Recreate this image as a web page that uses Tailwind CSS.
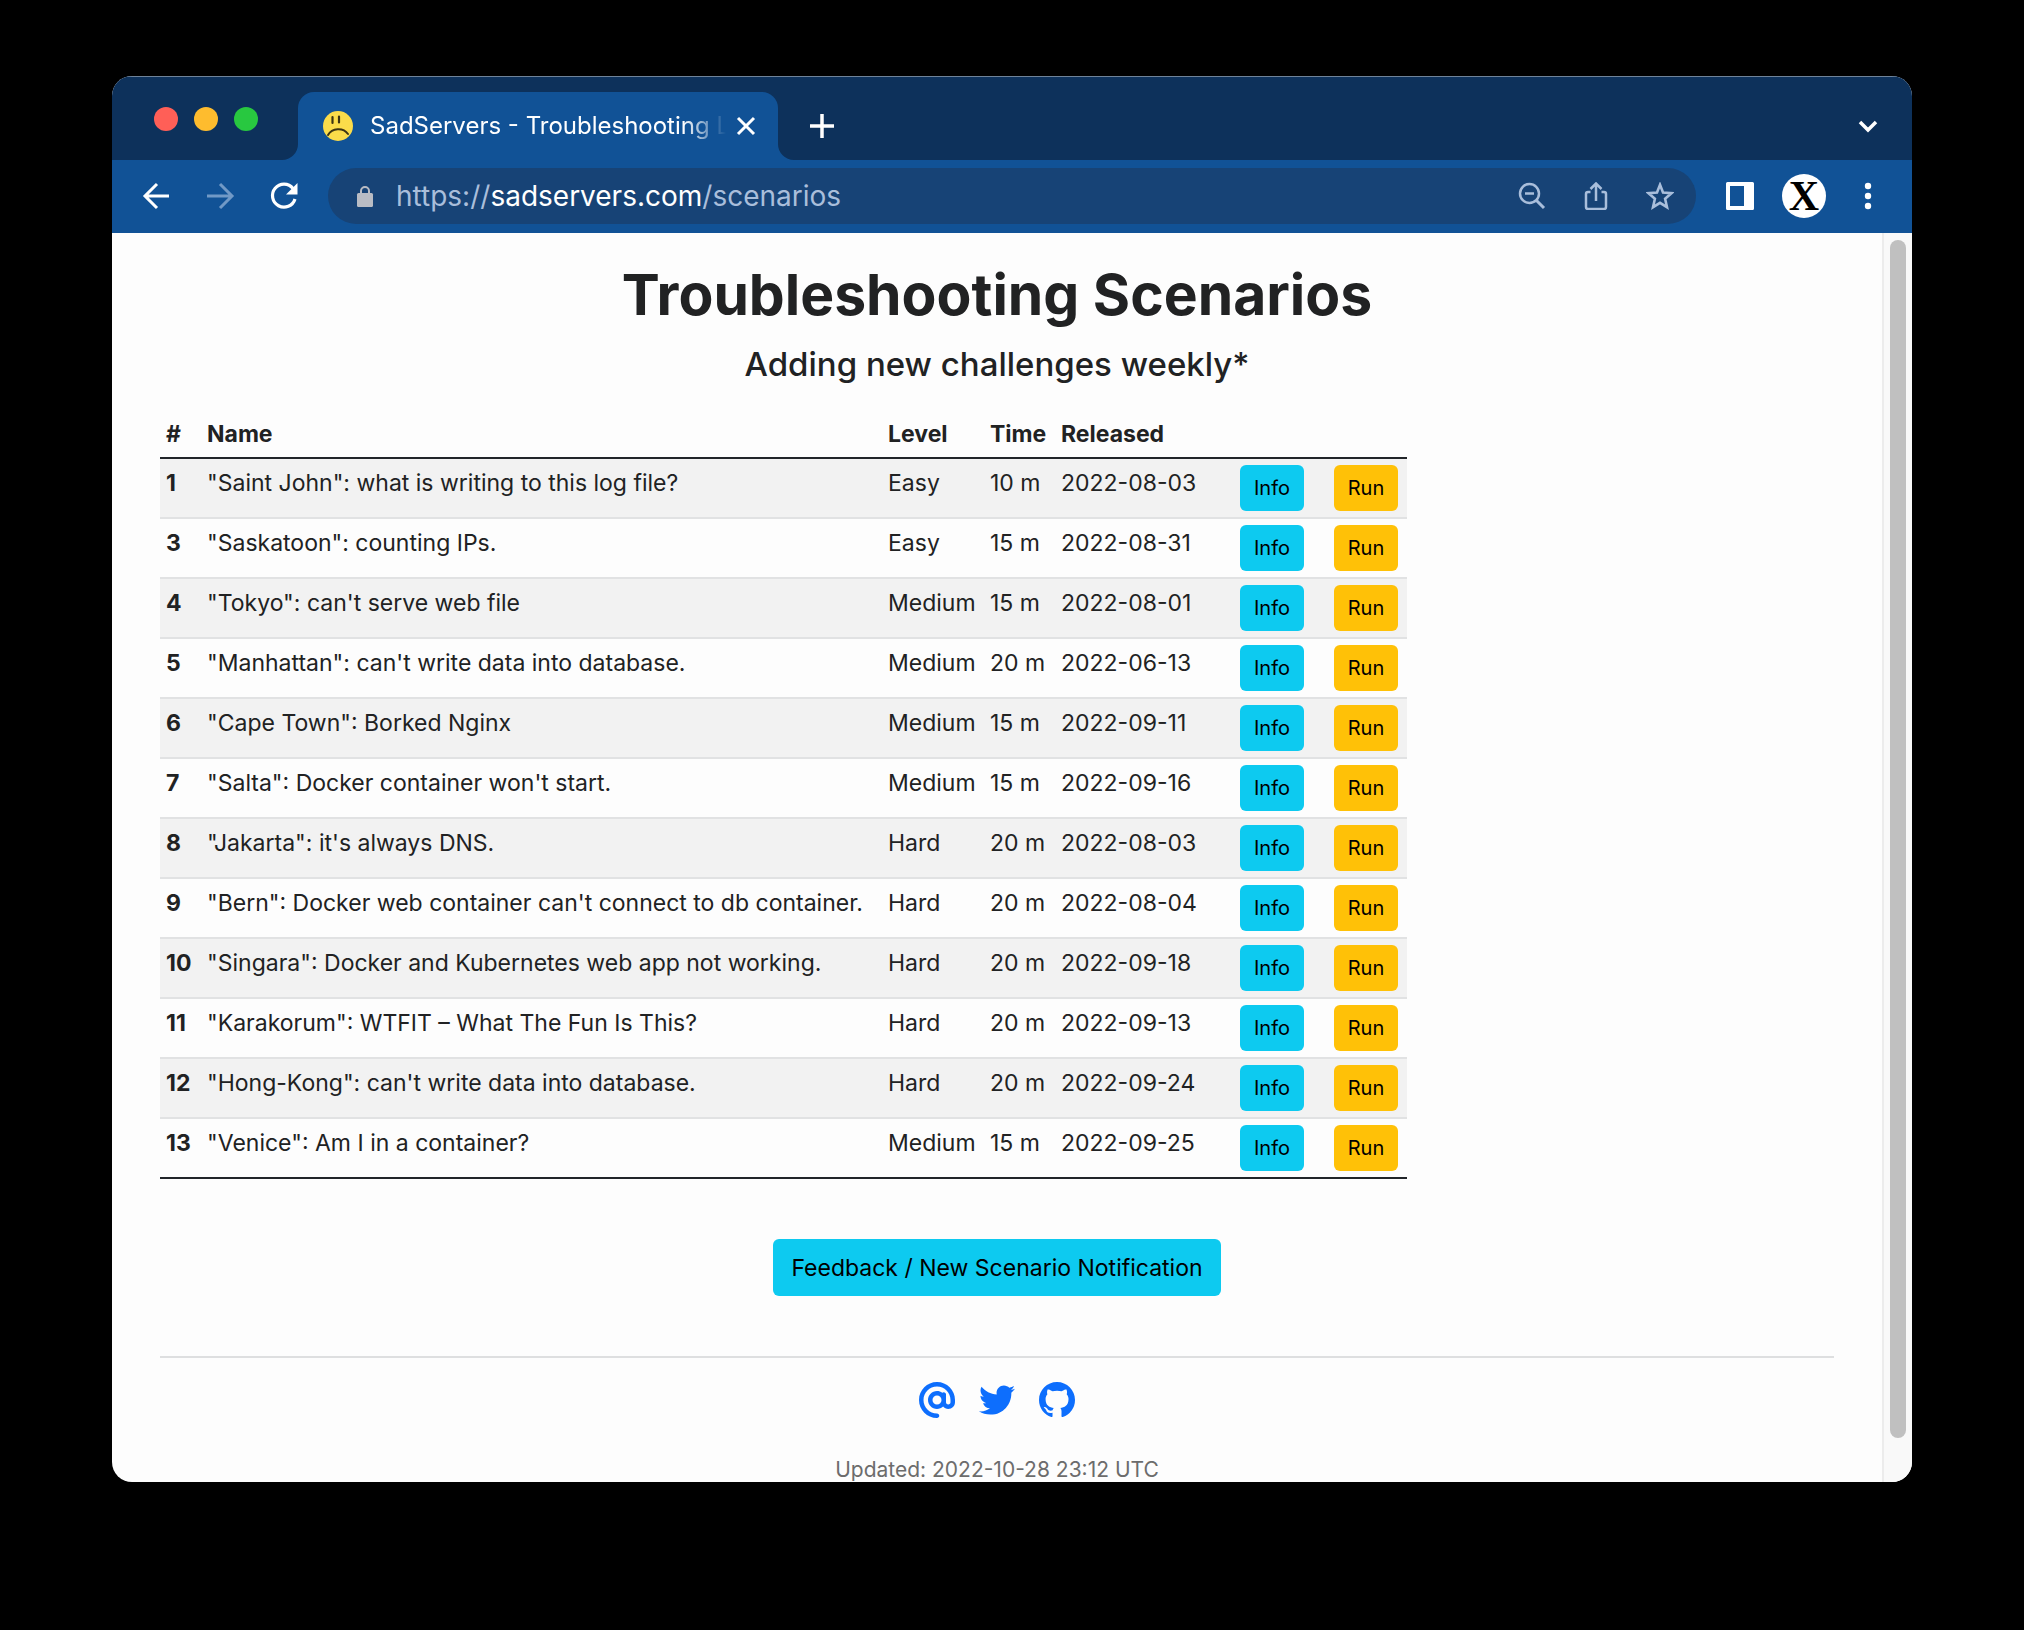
<!DOCTYPE html>
<html lang="en">
<head>
<meta charset="utf-8">
<meta name="viewport" content="width=device-width, initial-scale=1">
<title>SadServers - Troubleshooting Linux Servers</title>
<script src="https://cdn.jsdelivr.net/npm/@tailwindcss/browser@4"></script>
</head>
<body class="bg-black font-['Inter','Liberation_Sans',sans-serif]">
<div class="h-screen px-28 pt-[76px] pb-[148px]">
<div class="flex h-full flex-col overflow-hidden rounded-[20px] bg-[#fdfdfd]">

  <!-- Tab strip -->
  <header class="flex h-[84px] shrink-0 items-end border-t border-[#6f8399] bg-[#0d315b] pl-[42px] pr-8 text-white">
    <div class="flex h-full w-36 items-center gap-4">
      <button type="button" aria-label="Close window" class="size-6 rounded-full bg-[#ff5f57]"></button>
      <button type="button" aria-label="Minimize window" class="size-6 rounded-full bg-[#febc2e]"></button>
      <button type="button" aria-label="Zoom window" class="size-6 rounded-full bg-[#28c840]"></button>
    </div>
    <div class="relative flex h-[68px] w-[480px] items-center rounded-t-2xl bg-[#115296] pl-[25px] pr-5">
      <svg class="absolute -left-4 bottom-0 size-4" viewBox="0 0 16 16" fill="#115296" aria-hidden="true"><path d="M16 0v16H0A16 16 0 0 0 16 0z"/></svg>
      <svg class="absolute -right-4 bottom-0 size-4" viewBox="0 0 16 16" fill="#115296" aria-hidden="true"><path d="M0 0v16h16A16 16 0 0 1 0 0z"/></svg>
      <svg class="size-[30px] shrink-0" viewBox="0 0 30 30" aria-hidden="true"><circle cx="15" cy="15" r="15" fill="#fbdc4a"/><path d="M9.500 6v6M16 5.500v6" stroke="#3c3413" stroke-width="2.200" stroke-linecap="round"/><path d="M5 24c4-7 15-8 20-1" fill="none" stroke="#3c3413" stroke-width="2" stroke-linecap="round"/></svg>
      <span class="ml-[17px] min-w-0 flex-1 overflow-hidden whitespace-nowrap mask-r-from-88% text-2xl">SadServers - Troubleshooting Linux Servers</span>
      <button type="button" aria-label="Close tab" class="ml-2"><svg class="size-6" viewBox="0 0 24 24" fill="none" stroke="currentColor" stroke-width="3"><path d="M4 4l16 16M20 4L4 20"/></svg></button>
    </div>
    <button type="button" aria-label="New tab" class="mb-[22px] ml-8"><svg class="size-6" viewBox="0 0 24 24" stroke="currentColor" stroke-width="3.500"><path d="M12 0v24M0 12h24"/></svg></button>
    <button type="button" aria-label="Search tabs" class="mb-[22px] ml-auto"><svg class="size-6" viewBox="0 0 24 24" fill="none" stroke="currentColor" stroke-width="3.500"><path d="M4 8l8 8 8-8"/></svg></button>
  </header>

  <!-- Toolbar -->
  <nav class="flex h-[73px] shrink-0 items-center bg-[#115296] pb-0.5 pl-[26px] pr-[30px] text-white">
    <div class="flex w-[190px] items-center gap-7">
      <button type="button" aria-label="Back"><svg class="size-9" viewBox="0 0 36 36" fill="none" stroke="currentColor" stroke-width="3"><path d="M31 18H7M19 6L7 18l12 12"/></svg></button>
      <button type="button" aria-label="Forward" class="text-[#7199c6]"><svg class="size-9" viewBox="0 0 36 36" fill="none" stroke="currentColor" stroke-width="3"><path d="M5 18h25M18 6l12 12-12 12"/></svg></button>
      <button type="button" aria-label="Reload"><svg class="size-9" viewBox="0 0 36 36"><path d="M27 10.500A11.500 11.500 0 1 0 29 21" fill="none" stroke="currentColor" stroke-width="3.200"/><path d="M31.500 5v11.500H20z" fill="currentColor"/></svg></button>
    </div>
    <div class="flex h-14 min-w-0 flex-1 items-center rounded-full bg-[#174376] pl-7 pr-[22px] text-[#a9bedb]">
      <svg class="h-[22px] w-[18px] shrink-0 text-[#b9bcc4]" viewBox="0 0 18 22" aria-hidden="true"><path d="M5 9V6a4 4 0 0 1 8 0v3" fill="none" stroke="currentColor" stroke-width="2"/><rect x="1" y="8" width="16" height="14" rx="1.500" fill="currentColor"/></svg>
      <div class="ml-[22px] whitespace-nowrap text-[28px]">https://<span class="text-white">sadservers.com</span>/scenarios</div>
      <div class="ml-auto flex items-center gap-9">
        <button type="button" aria-label="Zoom"><svg class="size-7" viewBox="0 0 28 28" fill="none" stroke="currentColor" stroke-width="2.500"><circle cx="11.500" cy="11.500" r="9.500"/><path d="M7 11.500h9"/><path d="M18.500 18.500l7.500 7.500" stroke-width="3"/></svg></button>
        <button type="button" aria-label="Share"><svg class="size-7" viewBox="0 0 28 28" fill="none" stroke="currentColor" stroke-width="2.500"><path d="M8.500 10H6a2 2 0 0 0-2 2v13a2 2 0 0 0 2 2h16a2 2 0 0 0 2-2V12a2 2 0 0 0-2-2h-2.500M14 19V1.500M8.500 7L14 1.500 19.500 7"/></svg></button>
        <button type="button" aria-label="Bookmark"><svg class="size-7" viewBox="0 0 28 28" fill="none" stroke="currentColor" stroke-width="2.600"><path d="M14 2.800l3 7.700 8.400.7-6.300 5.500 1.900 8.500L14 20.800 7 25.200l1.900-8.500-6.300-5.500 8.400-.7z"/></svg></button>
      </div>
    </div>
    <div class="ml-[30px] flex items-center gap-7">
      <button type="button" aria-label="Side panel"><svg class="size-7" viewBox="0 0 28 28" fill="currentColor"><path fill-rule="evenodd" d="M1.500 0h25A1.500 1.500 0 0 1 28 1.500v25a1.500 1.500 0 0 1-1.500 1.500h-25A1.500 1.500 0 0 1 0 26.500v-25A1.500 1.500 0 0 1 1.500 0zM4 4v20h14V4z"/></svg></button>
      <button type="button" aria-label="Profile" class="flex size-11 items-center justify-center rounded-full bg-white font-['Liberation_Serif',serif] text-[42px] leading-none font-bold text-black">X</button>
      <button type="button" aria-label="Menu"><svg class="size-7" viewBox="0 0 28 28" fill="currentColor"><circle cx="14" cy="4" r="3.200"/><circle cx="14" cy="14" r="3.200"/><circle cx="14" cy="24" r="3.200"/></svg></button>
    </div>
  </nav>

  <!-- Page -->
  <div class="flex min-h-0 flex-1">
    <main class="min-w-0 flex-1 overflow-hidden px-12 pt-[26px] text-[23px] leading-9 text-[#212223]">
      <h1 class="text-center text-[57px] leading-[72px] font-bold">Troubleshooting Scenarios</h1>
      <h2 class="mt-3 text-center text-[33px] leading-[43px] font-medium">Adding new challenges weekly*</h2>
      <table class="mt-6 w-[1247px] max-w-full table-fixed border-collapse text-left whitespace-nowrap [&_td]:px-1.5 [&_td]:pt-1.5 [&_td]:align-top [&_th]:px-1.5 [&_th]:pt-1.5 [&_th]:align-top">
        <colgroup><col class="w-[41px]"><col><col class="w-[102px]"><col class="w-[71px]"><col class="w-[179px]"><col class="w-[94px]"><col class="w-[79px]"></colgroup>
        <thead>
          <tr class="h-12"><th scope="col">#</th><th scope="col">Name</th><th scope="col">Level</th><th scope="col">Time</th><th scope="col">Released</th><td></td><td></td></tr>
        </thead>
        <tbody class="border-b-2 border-[#212529] [&_tr]:h-15 [&_tr]:border-t-2 [&_tr]:border-[#e1e2e3] [&_tr:first-child]:border-[#212529] [&_tr:nth-child(odd)]:bg-[#f2f2f2] [&_button]:block [&_button]:h-[46px] [&_button]:w-16 [&_button]:rounded-md [&_button]:text-[20px] [&_button]:text-black [&_td:nth-child(6)_button]:bg-[#0dcaf0] [&_td:nth-child(7)_button]:bg-[#ffc107]">
          <tr><th scope="row">1</th><td>"Saint John": what is writing to this log file?</td><td>Easy</td><td>10 m</td><td>2022-08-03</td><td><button type="button">Info</button></td><td><button type="button">Run</button></td></tr>
          <tr><th scope="row">3</th><td>"Saskatoon": counting IPs.</td><td>Easy</td><td>15 m</td><td>2022-08-31</td><td><button type="button">Info</button></td><td><button type="button">Run</button></td></tr>
          <tr><th scope="row">4</th><td>"Tokyo": can't serve web file</td><td>Medium</td><td>15 m</td><td>2022-08-01</td><td><button type="button">Info</button></td><td><button type="button">Run</button></td></tr>
          <tr><th scope="row">5</th><td>"Manhattan": can't write data into database.</td><td>Medium</td><td>20 m</td><td>2022-06-13</td><td><button type="button">Info</button></td><td><button type="button">Run</button></td></tr>
          <tr><th scope="row">6</th><td>"Cape Town": Borked Nginx</td><td>Medium</td><td>15 m</td><td>2022-09-11</td><td><button type="button">Info</button></td><td><button type="button">Run</button></td></tr>
          <tr><th scope="row">7</th><td>"Salta": Docker container won't start.</td><td>Medium</td><td>15 m</td><td>2022-09-16</td><td><button type="button">Info</button></td><td><button type="button">Run</button></td></tr>
          <tr><th scope="row">8</th><td>"Jakarta": it's always DNS.</td><td>Hard</td><td>20 m</td><td>2022-08-03</td><td><button type="button">Info</button></td><td><button type="button">Run</button></td></tr>
          <tr><th scope="row">9</th><td>"Bern": Docker web container can't connect to db container.</td><td>Hard</td><td>20 m</td><td>2022-08-04</td><td><button type="button">Info</button></td><td><button type="button">Run</button></td></tr>
          <tr><th scope="row">10</th><td>"Singara": Docker and Kubernetes web app not working.</td><td>Hard</td><td>20 m</td><td>2022-09-18</td><td><button type="button">Info</button></td><td><button type="button">Run</button></td></tr>
          <tr><th scope="row">11</th><td>"Karakorum": WTFIT – What The Fun Is This?</td><td>Hard</td><td>20 m</td><td>2022-09-13</td><td><button type="button">Info</button></td><td><button type="button">Run</button></td></tr>
          <tr><th scope="row">12</th><td>"Hong-Kong": can't write data into database.</td><td>Hard</td><td>20 m</td><td>2022-09-24</td><td><button type="button">Info</button></td><td><button type="button">Run</button></td></tr>
          <tr><th scope="row">13</th><td>"Venice": Am I in a container?</td><td>Medium</td><td>15 m</td><td>2022-09-25</td><td><button type="button">Info</button></td><td><button type="button">Run</button></td></tr>
        </tbody>
      </table>
      <div class="mt-15 flex justify-center"><button type="button" class="h-[57px] rounded-md bg-[#0dcaf0] px-[18px] text-black">Feedback / New Scenario Notification</button></div>
      <footer class="mt-15 border-t-2 border-[#dedfe0] pt-6">
        <div class="flex justify-center gap-6 text-[#0d6efd]">
          <a href="#contact" aria-label="Email"><svg class="size-9" viewBox="0 0 512 512" fill="currentColor"><path d="M256 64C150 64 64 150 64 256s86 192 192 192c17.700 0 32 14.300 32 32s-14.300 32-32 32C114.600 512 0 397.400 0 256S114.600 0 256 0S512 114.600 512 256v32c0 53-43 96-96 96c-29.300 0-55.600-13.200-73.200-33.900C320 371.100 289.500 384 256 384c-70.700 0-128-57.300-128-128s57.300-128 128-128c27.900 0 53.700 8.900 74.700 24.100c5.700-5 13.100-8.100 21.300-8.100c17.700 0 32 14.300 32 32v112c0 17.700 14.300 32 32 32s32-14.300 32-32V256c0-106-86-192-192-192zm64 192a64 64 0 1 0-128 0 64 64 0 1 0 128 0z"/></svg></a>
          <a href="#twitter" aria-label="Twitter"><svg class="size-9" viewBox="0 0 512 512" fill="currentColor"><path d="M459.370 151.716c.325 4.548.325 9.097.325 13.645 0 138.720-105.583 298.558-298.558 298.558-59.452 0-114.680-17.219-161.137-47.106 8.447.974 16.568 1.299 25.340 1.299 49.055 0 94.213-16.568 130.274-44.832-46.132-.975-84.792-31.188-98.112-72.772 6.498.974 12.995 1.624 19.818 1.624 9.421 0 18.843-1.300 27.614-3.573-48.081-9.747-84.143-51.980-84.143-102.985v-1.299c13.969 7.797 30.214 12.670 47.431 13.319-28.264-18.843-46.781-51.005-46.781-87.391 0-19.492 5.197-37.360 14.294-52.954 51.655 63.675 129.300 105.258 216.365 109.807-1.624-7.797-2.599-15.918-2.599-24.040 0-57.828 46.782-104.934 104.934-104.934 30.213 0 57.502 12.670 76.670 33.137 23.715-4.548 46.456-13.320 66.599-25.340-7.798 24.366-24.366 44.833-46.132 57.827 21.117-2.273 41.584-8.122 60.426-16.243-14.292 20.791-32.161 39.308-52.628 54.253z"/></svg></a>
          <a href="#github" aria-label="GitHub"><svg class="size-9" viewBox="0 0 16 16" fill="currentColor"><path d="M8 0C3.580 0 0 3.580 0 8c0 3.540 2.290 6.530 5.470 7.590.4.070.55-.17.55-.38 0-.19-.01-.82-.01-1.490-2.010.37-2.530-.49-2.690-.94-.09-.23-.48-.94-.82-1.130-.28-.15-.68-.52-.01-.53.63-.01 1.080.58 1.230.82.72 1.210 1.870.87 2.330.66.070-.52.28-.87.51-1.070-1.780-.2-3.640-.89-3.640-3.950 0-.87.31-1.590.82-2.150-.08-.2-.36-1.020.08-2.120 0 0 .67-.21 2.200.82.64-.18 1.320-.27 2-.27s1.360.09 2 .27c1.530-1.040 2.200-.82 2.200-.82.44 1.100.16 1.920.08 2.120.51.56.82 1.270.82 2.150 0 3.070-1.870 3.750-3.650 3.950.29.25.54.73.54 1.480 0 1.070-.01 1.930-.01 2.200 0 .21.15.46.55.38A8.010 8.010 0 0 0 16 8c0-4.420-3.580-8-8-8z"/></svg></a>
        </div>
        <p class="mt-9 text-center text-[21px] leading-8 text-[#6c6c6c]">Updated: 2022-10-28 23:12 UTC</p>
      </footer>
    </main>
    <div class="w-[30px] shrink-0 border-l-2 border-[#ececec] bg-[#f9f9f9] pt-[7px] pb-11 pl-1.5" aria-hidden="true"><div class="h-full w-4 rounded-full bg-[#c0c0c0]"></div></div>
  </div>
</div>
</div>
</body>
</html>
